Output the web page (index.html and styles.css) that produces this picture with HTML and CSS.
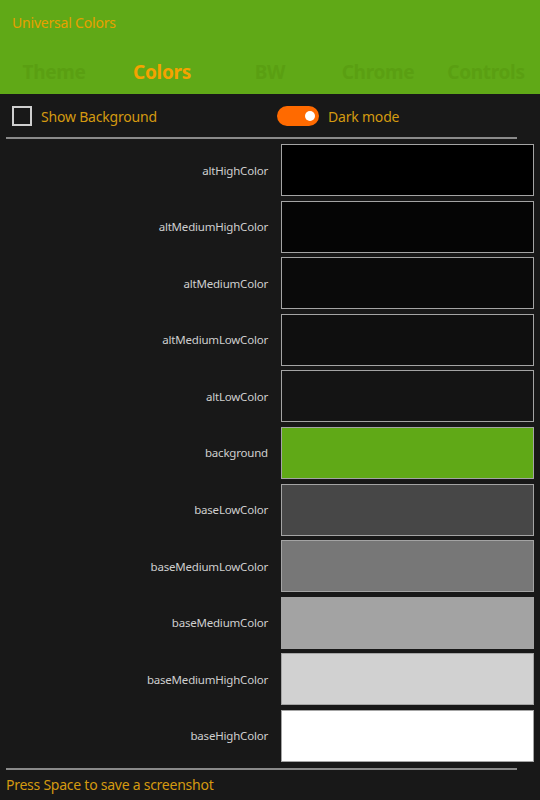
FILE: index.html
```html
<!DOCTYPE html>
<html>
<head>
<meta charset="utf-8">
<link rel="stylesheet" href="styles.css">
</head>
<body>
<div class="app">
  <header class="header">
    <div class="title">Universal Colors</div>
    <nav class="tabs">
      <div class="tab">Theme</div>
      <div class="tab active">Colors</div>
      <div class="tab">BW</div>
      <div class="tab">Chrome</div>
      <div class="tab">Controls</div>
    </nav>
  </header>
  <div class="controls">
    <label class="opt"><span class="checkbox"></span><span>Show Background</span></label>
    <label class="opt"><span class="toggle"><span class="knob"></span></span><span>Dark mode</span></label>
  </div>
  <div class="sep"></div>
  <div class="list">
    <div class="row"><div class="label">altHighColor</div><div class="swatch c1"></div></div>
    <div class="row"><div class="label">altMediumHighColor</div><div class="swatch c2"></div></div>
    <div class="row"><div class="label">altMediumColor</div><div class="swatch c3"></div></div>
    <div class="row"><div class="label">altMediumLowColor</div><div class="swatch c4"></div></div>
    <div class="row"><div class="label">altLowColor</div><div class="swatch c5"></div></div>
    <div class="row"><div class="label">background</div><div class="swatch c6"></div></div>
    <div class="row"><div class="label">baseLowColor</div><div class="swatch c7"></div></div>
    <div class="row"><div class="label">baseMediumLowColor</div><div class="swatch c8"></div></div>
    <div class="row"><div class="label">baseMediumColor</div><div class="swatch c9"></div></div>
    <div class="row"><div class="label">baseMediumHighColor</div><div class="swatch c10"></div></div>
    <div class="row"><div class="label">baseHighColor</div><div class="swatch c11"></div></div>
  </div>
  <div class="sep sep-bottom"></div>
  <div class="footer">Press Space to save a screenshot</div>
</div>
</body>
</html>
```
FILE: styles.css
```css
html, body {
  margin: 0;
  padding: 0;
  background: #181818;
}
body {
  font-family: "Noto Sans", "Open Sans", sans-serif;
  width: 540px;
  height: 800px;
  overflow: hidden;
}
.header {
  background: #60a917;
  height: 94px;
  display: flex;
  flex-direction: column;
}
.title {
  color: #e8a000;
  font-size: 14px;
  line-height: 20px;
  padding: 13px 0 0 12px;
  letter-spacing: -0.2px;
}
.tabs {
  display: grid;
  grid-template-columns: repeat(5, 1fr);
  margin-top: 26px;
}
.tab {
  text-align: center;
  font-size: 19px;
  font-weight: 700;
  line-height: 26px;
  color: #5a9f12;
  letter-spacing: -0.3px;
}
.tab.active {
  color: #f5a300;
}
.controls {
  display: grid;
  grid-template-columns: 265px 1fr;
  padding: 12px 0 0 12px;
  box-sizing: border-box;
  height: 43px;
}
.opt {
  display: flex;
  align-items: center;
  gap: 9px;
  height: 20px;
  color: #d49a10;
  font-size: 14px;
  letter-spacing: -0.2px;
}
.checkbox {
  width: 16px;
  height: 16px;
  border: 2px solid #cfcfcf;
  display: block;
}
.toggle {
  width: 42px;
  height: 20px;
  border-radius: 10px;
  background: #ff6a00;
  position: relative;
  display: block;
}
.knob {
  position: absolute;
  width: 10px;
  height: 10px;
  border-radius: 50%;
  background: #fff;
  top: 5px;
  left: 28px;
}
.sep {
  height: 2px;
  background: #8a8a8a;
  margin: 0 23px 0 6px;
}
.list {
  display: flex;
  flex-direction: column;
  gap: 4.6px;
  padding-top: 5px;
}
.row {
  display: flex;
  align-items: center;
  height: 52px;
}
.label {
  width: 262px;
  margin-left: 6px;
  text-align: right;
  color: #cfcfcf;
  font-size: 11.5px;
  letter-spacing: -0.2px;
}
.swatch {
  margin-left: 13px;
  width: 251px;
  height: 50px;
  border: 1px solid #a4a4a4;
}
.c1 { background: #000000; }
.c2 { background: #050505; }
.c3 { background: #0a0a0a; }
.c4 { background: #0f0f0f; }
.c5 { background: #141414; }
.c6 { background: #60a917; }
.c7 { background: #474747; }
.c8 { background: #777777; }
.c9 { background: #a3a3a3; }
.c10 { background: #d1d1d1; }
.c11 { background: #ffffff; }
.sep-bottom {
  margin-top: 6px;
}
.footer {
  color: #d49a10;
  font-size: 14px;
  line-height: 20px;
  padding: 5px 0 0 6px;
  letter-spacing: -0.25px;
}
```
